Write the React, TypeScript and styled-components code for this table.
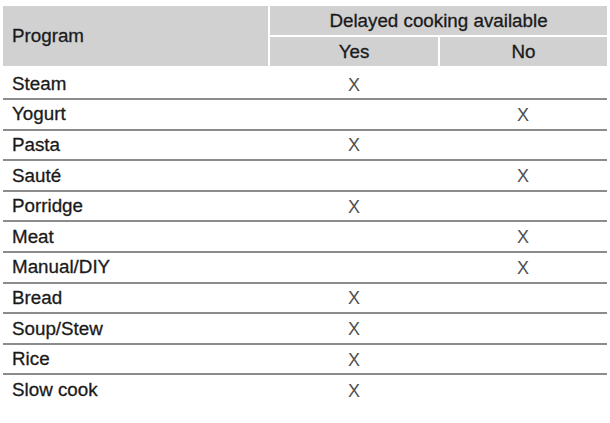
import styled, { createGlobalStyle } from 'styled-components';

const programs = [
  { name: 'Steam', delayed: true },
  { name: 'Yogurt', delayed: false },
  { name: 'Pasta', delayed: true },
  { name: 'Sauté', delayed: false },
  { name: 'Porridge', delayed: true },
  { name: 'Meat', delayed: false },
  { name: 'Manual/DIY', delayed: false },
  { name: 'Bread', delayed: true },
  { name: 'Soup/Stew', delayed: true },
  { name: 'Rice', delayed: true },
  { name: 'Slow cook', delayed: true },
];

const GlobalStyle = createGlobalStyle`
  html, body {
    margin: 0;
    padding: 0;
    background: #fff;
  }
  body {
    font-family: "Liberation Sans", Arial, sans-serif;
  }
`;

const StyledPage = styled.div`
  padding: 6px 3px 0 3px;
  width: 604px;
`;

const StyledTable = styled.table`
  width: 604px;
  border-collapse: collapse;
  table-layout: fixed;
  font-size: 18.8px;
  color: #1a1a1a;
`;

const StyledHeadCell = styled.th<{ $last?: boolean; $split?: boolean }>`
  background: #d1d1d1;
  font-weight: normal;
  text-align: center;
  padding: 1px 0 0 0;
  height: 28px;
  border-right: ${(p) => (p.$last ? 'none' : '2px solid #fff')};
  border-bottom: ${(p) => (p.$split ? '2px solid #fff' : 'none')};
  color: #1a1a1a;
  -webkit-text-stroke: 0.3px #1a1a1a;
`;

const StyledProgramHead = styled(StyledHeadCell)`
  text-align: left;
  padding: 0 0 0 9px;
`;

const StyledRow = styled.tr<{ $first?: boolean; $last?: boolean }>`
  height: ${(p) => (p.$first ? '33px' : '30.6px')};
  border-bottom: ${(p) => (p.$last ? 'none' : '2px solid #8c8c8c')};

  & > td {
    padding-top: ${(p) => (p.$first ? '5px' : '1px')};
  }
`;

const StyledNameCell = styled.td`
  padding: 1px 0 0 9px;
  line-height: 1;
  -webkit-text-stroke: 0.3px #1a1a1a;
`;

const StyledMarkCell = styled.td`
  padding: 1px 0 0 0;
  text-align: center;
  color: #505050;
  font-size: 18px;
  line-height: 1;
`;

const App = () => {
  return (
    <StyledPage>
      <GlobalStyle />
      <StyledTable>
        <colgroup>
          <col style={{ width: 266 }} />
          <col style={{ width: 170 }} />
          <col style={{ width: 168 }} />
        </colgroup>
        <thead>
          <tr>
            <StyledProgramHead rowSpan={2}>Program</StyledProgramHead>
            <StyledHeadCell colSpan={2} $last $split>
              Delayed cooking available
            </StyledHeadCell>
          </tr>
          <tr>
            <StyledHeadCell>Yes</StyledHeadCell>
            <StyledHeadCell $last>No</StyledHeadCell>
          </tr>
        </thead>
        <tbody>
          {programs.map((item, index) => (
            <StyledRow
              key={item.name}
              $first={index === 0}
              $last={index === programs.length - 1}
            >
              <StyledNameCell>{item.name}</StyledNameCell>
              <StyledMarkCell>{item.delayed ? 'X' : ''}</StyledMarkCell>
              <StyledMarkCell>{item.delayed ? '' : 'X'}</StyledMarkCell>
            </StyledRow>
          ))}
        </tbody>
      </StyledTable>
    </StyledPage>
  );
};

export default App;
